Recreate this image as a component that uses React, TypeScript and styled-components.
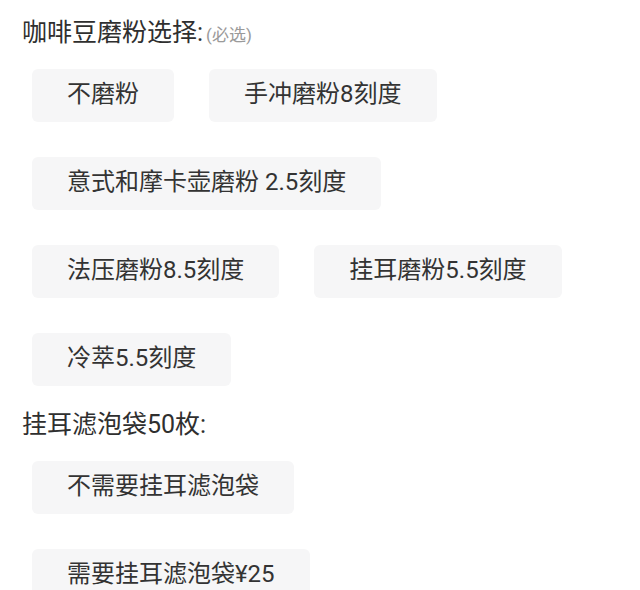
import React from "react";
import styled, { createGlobalStyle } from "styled-components";

const GlobalStyle = createGlobalStyle`
  html, body {
    margin: 0;
    padding: 0;
    background: #ffffff;
  }
  body {
    font-family: Roboto, "Noto Sans CJK SC", "Noto Sans", sans-serif;
    color: #333333;
  }
`;

const Page = styled.div`
  width: 640px;
  height: 590px;
  overflow: hidden;
  padding: 16px 0 0 22px;
  box-sizing: border-box;
`;

const Section = styled.section<{ $gapTop?: number }>`
  margin-top: ${(p) => p.$gapTop ?? 0}px;
`;

const Title = styled.div`
  font-size: 25px;
  line-height: 34px;
  color: #2f2f2f;
  white-space: nowrap;
`;

const Hint = styled.span`
  font-size: 17px;
  color: #9a9a9a;
  margin-left: 3px;
`;

const Options = styled.div<{ $top: number }>`
  display: flex;
  flex-wrap: wrap;
  column-gap: 35px;
  row-gap: 35px;
  margin-top: ${(p) => p.$top}px;
  padding-left: 10px;
  width: 560px;
`;

const Chip = styled.button`
  box-sizing: border-box;
  height: 53px;
  padding: 0 35px 2px;
  border: none;
  border-radius: 6px;
  background: #f6f6f7;
  font-family: inherit;
  font-size: 24px;
  line-height: 51px;
  color: #333333;
  white-space: nowrap;
  cursor: pointer;
`;

const grindOptions = [
  "不磨粉",
  "手冲磨粉8刻度",
  "意式和摩卡壶磨粉 2.5刻度",
  "法压磨粉8.5刻度",
  "挂耳磨粉5.5刻度",
  "冷萃5.5刻度",
];

const bagOptions = ["不需要挂耳滤泡袋", "需要挂耳滤泡袋¥25"];

export default function App() {
  return (
    <>
      <GlobalStyle />
      <Page>
        <Section>
          <Title>
            咖啡豆磨粉选择:<Hint>(必选)</Hint>
          </Title>
          <Options $top={17}>
            {grindOptions.map((o) => (
              <Chip key={o}>{o}</Chip>
            ))}
          </Options>
        </Section>
        <Section $gapTop={22}>
          <Title>挂耳滤泡袋50枚:</Title>
          <Options $top={19}>
            {bagOptions.map((o) => (
              <Chip key={o}>{o}</Chip>
            ))}
          </Options>
        </Section>
      </Page>
    </>
  );
}
